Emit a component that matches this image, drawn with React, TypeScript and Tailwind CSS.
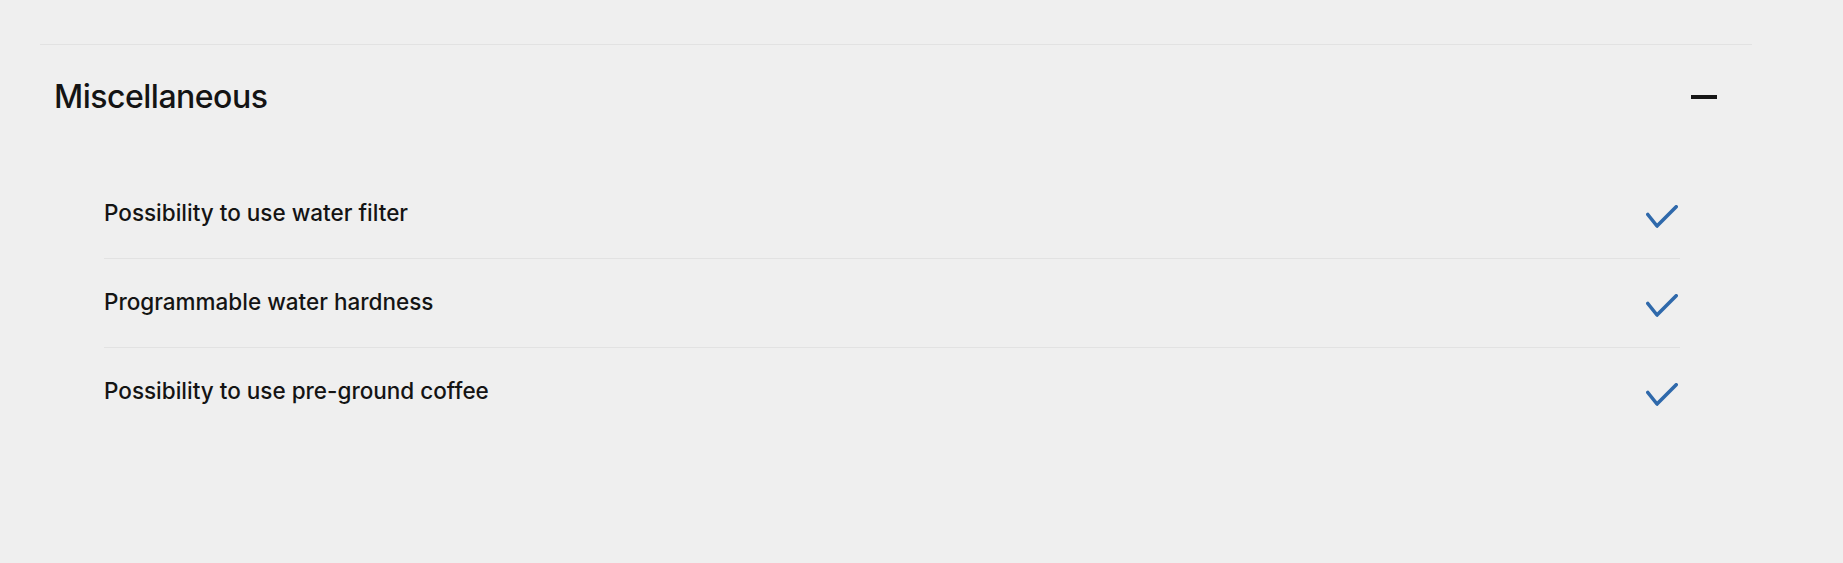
import React from "react";

const items = [
  "Possibility to use water filter",
  "Programmable water hardness",
  "Possibility to use pre-ground coffee",
];

function Check() {
  return (
    <svg width="32" height="24" viewBox="0 0 32 24" fill="none" className="mt-[5px]">
      <polyline
        points="1.8,9.5 11,21 30.2,1.8"
        stroke="#2f69ab"
        strokeWidth="3.6"
        strokeLinecap="round"
        strokeLinejoin="round"
      />
    </svg>
  );
}

export default function App() {
  return (
    <div
      className="h-[563px] w-full bg-[#efefef] pt-[44px] text-[#141414]"
      style={{ fontFamily: "Inter, 'Noto Sans', sans-serif" }}
    >
      <div className="ml-[40px] w-[1712px] border-t border-[#e2e2e2]">
        <div className="flex h-[104px] items-center justify-between pl-[14px] pr-[35px]">
          <h2 className="text-[32px] font-medium leading-none tracking-[-0.5px]">Miscellaneous</h2>
          <div className="h-[4px] w-[26px] bg-[#161616]" />
        </div>
        <div className="ml-[64px] mt-[21px] w-[1576px]">
          {items.map((t, i) => (
            <div
              key={t}
              className={`flex items-center justify-between pr-[2px] ${
                i < items.length - 1 ? "h-[89px] border-b border-[#e2e2e2]" : "h-[88px]"
              }`}
            >
              <span className="pb-[2px] text-[22.5px] font-medium leading-none">{t}</span>
              <Check />
            </div>
          ))}
        </div>
      </div>
    </div>
  );
}
